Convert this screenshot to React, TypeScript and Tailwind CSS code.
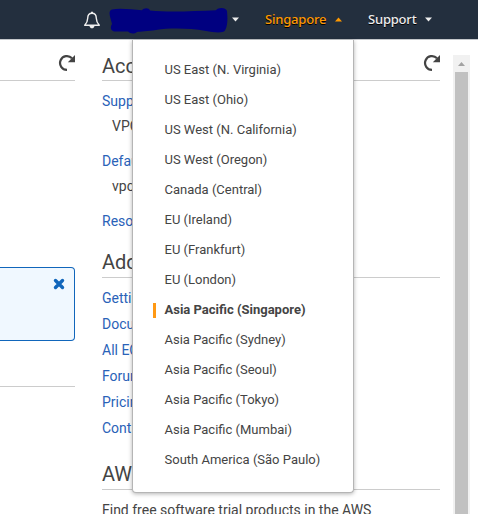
import React from "react";

const regions = [
  "US East (N. Virginia)",
  "US East (Ohio)",
  "US West (N. California)",
  "US West (Oregon)",
  "Canada (Central)",
  "EU (Ireland)",
  "EU (Frankfurt)",
  "EU (London)",
  "Asia Pacific (Singapore)",
  "Asia Pacific (Sydney)",
  "Asia Pacific (Seoul)",
  "Asia Pacific (Tokyo)",
  "Asia Pacific (Mumbai)",
  "South America (São Paulo)",
];

const links = ["Gettin", "Docu", "All EC", "Forum", "Pricin", "Cont"];

function Refresh() {
  return (
    <svg className="h-[18px] w-[17px] shrink-0" viewBox="0 0 17 18" fill="none">
      <path d="M9 15.9A6.9 6.9 0 1 1 14 4.3" stroke="#444" strokeWidth="2.2" />
      <path d="M17 1V8.2H9.8Z" fill="#444" />
    </svg>
  );
}

function Caret({ up = false }: { up?: boolean }) {
  return (
    <svg className="h-[5px] w-[7px] shrink-0" viewBox="0 0 7 5" fill="currentColor">
      <path d={up ? "M0 4.5L3.5 .5L7 4.5Z" : "M0 .5L3.5 4.5L7 .5Z"} />
    </svg>
  );
}

function Header() {
  return (
    <header className="flex h-10 items-center border-b border-[#c4c7cb] bg-[#232f3e] font-['Noto_Sans','Open_Sans',sans-serif] text-[13px] font-medium text-[#eee]">
      <svg className="ml-[83px] h-[18px] w-[18px] shrink-0" viewBox="0 0 18 18" fill="none">
        <path
          d="M9 2.2C6 2.2 4.7 4.4 4.7 7.3C4.7 10.5 3.6 12.2 1.7 14.3H16.3C14.4 12.2 13.3 10.5 13.3 7.3C13.3 4.4 12 2.2 9 2.2Z"
          stroke="#eee"
          strokeWidth="1.4"
          strokeLinejoin="round"
        />
        <path d="M8 2V.8H10V2ZM6.4 14.5H11.6C11.3 16.4 10.5 17.3 9 17.3S6.7 16.4 6.4 14.5Z" fill="#eee" />
      </svg>
      <svg className="ml-[7px] h-[28px] w-[120px] shrink-0" viewBox="0 0 120 28">
        <path
          d="M4 3.4C12 2 24 3.4 34 4.2C36 1.5 41 1.5 42 4.5C62 6.5 86 5 108 4.2C110 1 118 1 119 5C119.6 11 120 20 117 24.5C115 27.6 105 26.4 98 25C80 22 62 22 48 24C40 25.4 32 25.4 29 26C26 28.5 22 27.6 20 25.6L6 25.6C2.4 24.5 2 21 4 18C3 13 -1 5 4 3.4Z"
          fill="#000080"
        />
      </svg>
      <div className="ml-[4px] flex"><Caret /></div>
      <span className="ml-[26px] w-[70px] tracking-[-0.2px] text-[#ff9900] [text-shadow:0_1px_0_#000]">Singapore</span>
      <div className="flex text-[#ff9900]"><Caret up /></div>
      <span className="ml-[26px] w-[57px] tracking-[-0.2px] [text-shadow:0_1px_0_#000]">Support</span>
      <Caret />
    </header>
  );
}

function RegionMenu() {
  return (
    <ul className="absolute top-10 left-[132px] h-[453px] w-[222px] rounded-b-[4px] border border-t-0 border-[#b5b5b5] bg-white pt-[15px] shadow-[0_1px_4px_rgba(0,0,0,0.3)]">
      {regions.map((region) =>
        region === "Asia Pacific (Singapore)" ? (
          <li key={region} className="flex h-[30px] items-center pl-5 text-[13px] font-bold whitespace-nowrap">
            <i className="mr-[8.5px] h-[15px] w-[3px] bg-[#ff9914]" />
            {region}
          </li>
        ) : (
          <li key={region} className="flex h-[30px] items-center pl-[31.5px] text-[13px] whitespace-nowrap">
            {region}
          </li>
        ),
      )}
    </ul>
  );
}

export default function App() {
  return (
    <div className="relative h-[514px] w-[478px] overflow-hidden bg-white font-[Roboto,sans-serif] text-[14px] text-[#444]">
      <Header />
      <div className="flex h-[474px]">
        <section className="w-[75px] shrink-0">
          <div className="flex h-[41px] justify-end border-b border-[#ccc] pt-[14px]"><Refresh /></div>
          <div className="mt-[186px] flex h-[74px] justify-end rounded-r-[4px] border border-l-0 border-[#1166bb] bg-[#f0f8ff] pt-[10px] pr-[9px]">
            <svg className="h-[12px] w-[12px]" viewBox="0 0 12 12">
              <path d="M2.5 2.5L9.5 9.5M9.5 2.5L2.5 9.5" stroke="#1166bb" strokeWidth="3.4" strokeLinecap="round" />
            </svg>
          </div>
          <div className="mt-[45px] h-px bg-[#ccc]" />
        </section>

        <main className="ml-[27px] w-[338px] shrink-0 whitespace-nowrap">
          <div className="flex h-[41px] justify-between border-b border-[#ccc] pt-[14px]">
            <h2 className="text-[20px] leading-[24px]">Acc</h2>
            <Refresh />
          </div>
          <dl className="pt-[10px] leading-[20px] text-[#2a62b8]">
            <dt>Supp</dt>
            <dd className="mt-[5px] pl-[10px] text-[#444]">VPC</dd>
            <dt className="mt-[15px]">Defau</dt>
            <dd className="mt-[5px] pl-[10px] text-[#444]">vpc</dd>
            <dt className="mt-[15px]">Reso</dt>
          </dl>
          <h2 className="mt-[19px] h-[28px] border-b border-[#ccc] text-[20px] leading-[24px]">Add</h2>
          <ul className="pt-[7px] leading-[26px] text-[#2a62b8]">
            {links.map((link) => <li key={link}>{link}</li>)}
          </ul>
          <h2 className="mt-[21px] h-[28px] border-b border-[#ccc] text-[20px] leading-[24px]">AW</h2>
          <p className="pt-[10px] leading-[20px]">Find free software trial products in the AWS</p>
        </main>

        <aside className="mt-[15px] ml-[13px] flex w-[17px] shrink-0 flex-col items-center bg-[#f1f1f1]">
          <svg className="h-[17px] w-[17px] shrink-0" viewBox="0 0 17 17">
            <path d="M5 11L8.5 7L12 11Z" fill="#a3a3a3" />
          </svg>
          <div className="w-[13px] flex-1 bg-[#c1c1c1]" />
        </aside>
      </div>
      <RegionMenu />
    </div>
  );
}
